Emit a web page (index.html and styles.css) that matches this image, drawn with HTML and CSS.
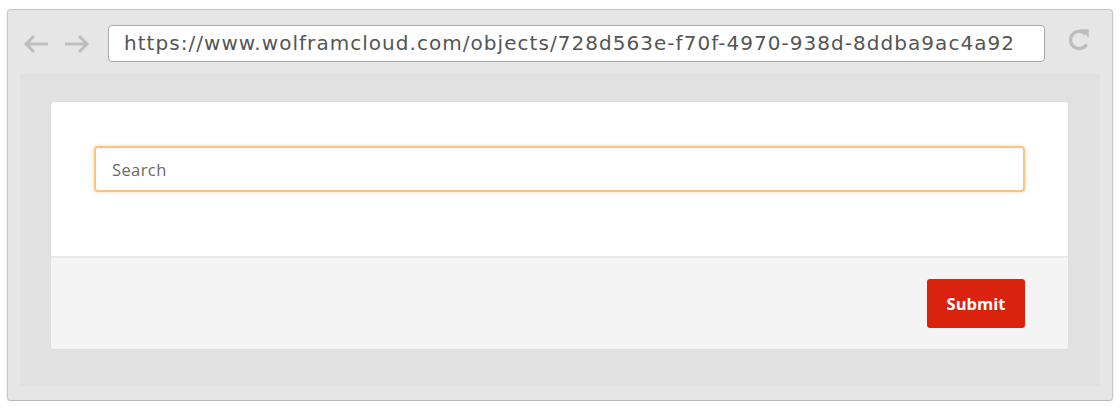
FILE: index.html
```html
<!doctype html>
<html lang="en">

<head>
  <meta charset="utf-8">
  <title>Search</title>
  <link rel="stylesheet" href="styles.css">
</head>

<body>
  <div class="window">
    <div class="toolbar">
      <span class="nav">
        <svg width="28" height="20" viewBox="0 0 28 20"><path d="M26 10H4M12 2L4 10L12 18" fill="none" stroke="#bdbdbd" stroke-width="3"/></svg>
        <svg width="28" height="20" viewBox="0 0 28 20"><path d="M2 10H24M16 2L24 10L16 18" fill="none" stroke="#bdbdbd" stroke-width="3"/></svg>
      </span>
      <div class="url">https://www.wolframcloud.com/objects/728d563e-f70f-4970-938d-8ddba9ac4a92</div>
      <svg class="reload" width="26" height="26" viewBox="0 0 26 26"><path d="M19 7.5A8 8 0 1 0 20 17" fill="none" stroke="#bdbdbd" stroke-width="3"/><path d="M14 3H22V11Z" fill="#bdbdbd"/></svg>
    </div>
    <div class="content">
      <form class="card">
        <div class="card-body">
          <input class="search" type="text" placeholder="Search">
        </div>
        <div class="card-foot">
          <button class="submit" type="button">Submit</button>
        </div>
      </form>
    </div>
  </div>
</body>

</html>
```

FILE: styles.css
```css
body { margin: 0; background: #fff; }
.window { margin: 9px 0 0 7px; width: 1080px; height: 376px; padding: 0 12px 14px; border: 1px solid #c8c8c8; border-bottom-color: #b8b8b8; border-radius: 4px; background: #e6e6e6; box-shadow: 0 1px 2px rgba(0,0,0,.15); }
.toolbar { height: 64px; display: flex; align-items: center; }
.nav { display: flex; gap: 13px; margin: 0 17px 0 2px; padding-top: 4px; }
.url { flex: none; width: 920px; height: 35px; margin-top: 2px; padding-left: 15px; border: 1px solid #a9a9a9; border-radius: 4px; background: #fff; font: 20px/35px "DejaVu Sans", sans-serif; color: #555; letter-spacing: 1.04px; white-space: nowrap; overflow: hidden; }
.reload { margin-left: 20px; margin-top: -4px; width: 28px; height: 28px; }
.content { height: 284px; padding: 28px 32px 0 31px; background: #e1e1e1; }
.card { margin: 0; border-radius: 3px; background: #fff; box-shadow: 0 0 0 1px #dedede; overflow: hidden; }
.card-body { padding: 44px 43px 64px; border-bottom: 2px solid #e9e9e9; }
.search { display: block; box-sizing: border-box; width: 100%; height: 46px; padding: 0 16px; border: 2px solid #fdc27f; border-radius: 4px; box-shadow: 0 0 4px rgba(253,180,100,.45); font: 16.5px "Open Sans", sans-serif; letter-spacing: .4px; outline: none; }
.search::placeholder { color: #6a6a6a; }
.card-foot { display: flex; justify-content: flex-end; height: 91px; padding: 21px 43px 0; box-sizing: border-box; background: #f4f4f4; }
.submit { width: 98px; height: 49px; border: 0; border-radius: 3px; background: #d9230f; color: #fff; font: bold 16.5px "Open Sans", sans-serif; }
```
